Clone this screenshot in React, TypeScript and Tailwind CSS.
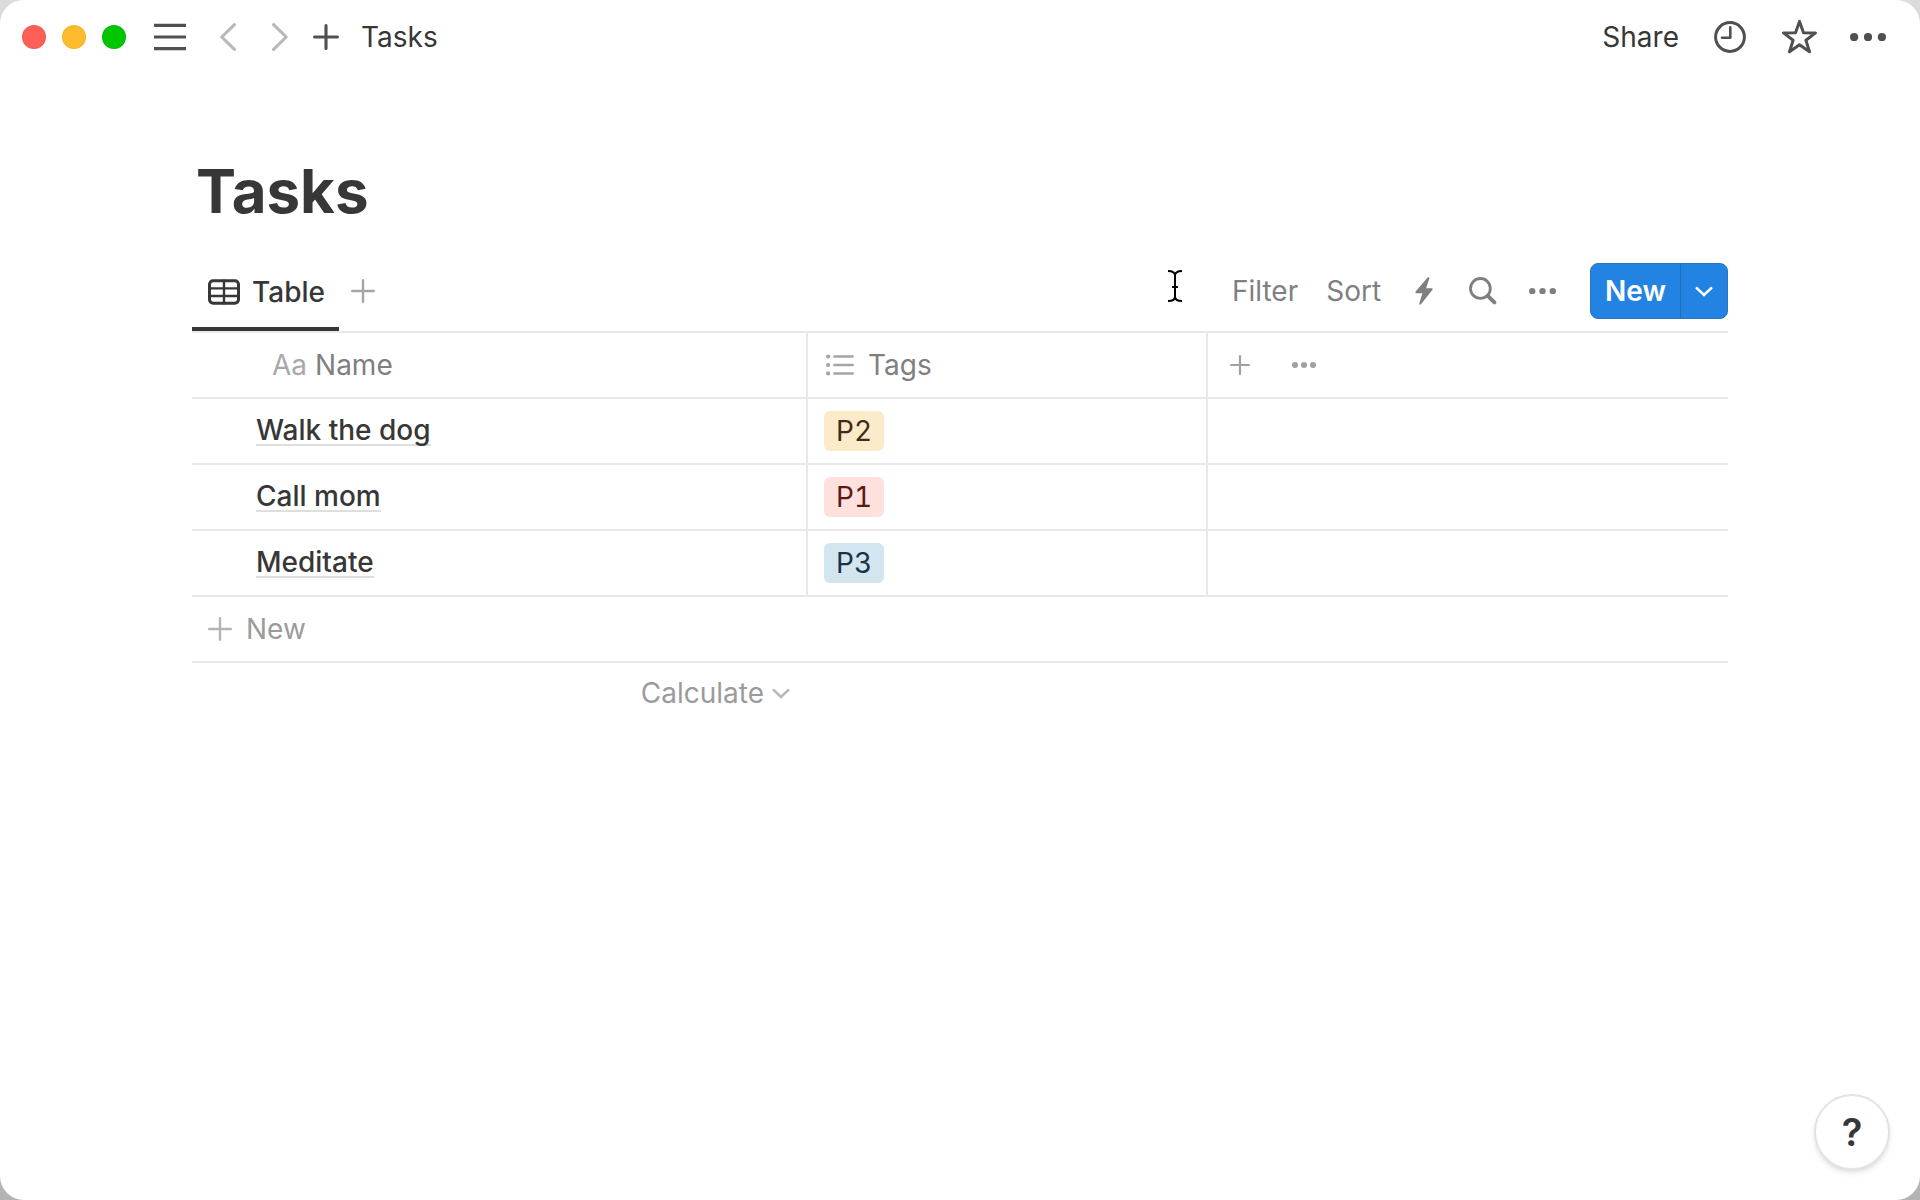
import type { ReactNode, SVGProps } from 'react';

type Tag = 'P1' | 'P2' | 'P3';

const TASKS: { name: string; tag: Tag }[] = [
  { name: 'Walk the dog', tag: 'P2' },
  { name: 'Call mom', tag: 'P1' },
  { name: 'Meditate', tag: 'P3' },
];

const TAG_STYLES: Record<Tag, string> = {
  P1: 'bg-[#fee1dd] text-[#5d1715]',
  P2: 'bg-[#fbebc8] text-[#402c1b]',
  P3: 'bg-[#d3e5ef] text-[#183347]',
};

function Stroke({ children, ...props }: SVGProps<SVGSVGElement>) {
  return (
    <svg fill="none" stroke="currentColor" strokeLinecap="round" strokeLinejoin="round" aria-hidden="true" {...props}>
      {children}
    </svg>
  );
}

function MenuIcon() {
  return (
    <svg width="32" height="28" viewBox="0 0 32 28" fill="currentColor" aria-hidden="true">
      <path d="M0 .8h32V4H0zM0 12.400h32v3.200H0zM0 24h32v3.200H0z" />
    </svg>
  );
}

function PlusIcon({ size, weight = 2 }: { size: number; weight?: number }) {
  return (
    <Stroke width={size} height={size} viewBox={`0 0 ${size} ${size}`} strokeWidth={weight}>
      <path d={`M${size / 2} ${weight / 2}V${size - weight / 2}M${weight / 2} ${size / 2}H${size - weight / 2}`} />
    </Stroke>
  );
}

function DotsIcon({ width, radius }: { width: number; radius: number }) {
  return (
    <svg width={width} height={radius * 2} viewBox={`0 0 ${width} ${radius * 2}`} fill="currentColor" aria-hidden="true">
      <circle cx={radius} cy={radius} r={radius} />
      <circle cx={width / 2} cy={radius} r={radius} />
      <circle cx={width - radius} cy={radius} r={radius} />
    </svg>
  );
}

function ChevronDown() {
  return (
    <Stroke width="18" height="12" viewBox="0 0 18 12" strokeWidth="2.6" strokeLinecap="butt" strokeLinejoin="miter">
      <path d="M1 2.400l8 7.600 8-7.600" />
    </Stroke>
  );
}

function TableIcon() {
  return (
    <Stroke width="32" height="26" viewBox="0 0 32 26" strokeWidth="3">
      <rect x="1.5" y="1.8" width="29" height="22.4" rx="3.6" />
      <path d="M1.5 9.4h29M1.5 17h29M16 1.800v22.400" strokeWidth="2.4" />
    </Stroke>
  );
}

function ListIcon() {
  return (
    <Stroke width="28" height="22" viewBox="0 0 28 22" strokeWidth="2.5">
      <path d="M8.300 2.600h18.400M8.300 11h18.400M8.300 19.400h18.400" />
      <path d="M2.100 2.600h.01M2.100 11h.01M2.100 19.400h.01" strokeWidth="4.2" />
    </Stroke>
  );
}

function IconButton({ label, className = '', children }: { label: string; className?: string; children: ReactNode }) {
  return (
    <button type="button" aria-label={label} className={`flex shrink-0 items-center justify-center ${className}`}>
      {children}
    </button>
  );
}

function TitleBar() {
  return (
    <header className="flex h-[74px] items-center justify-between pr-[34px] pl-[22px] text-[#505050]">
      <div className="flex items-center">
        <div className="flex gap-4">
          <span className="size-6 rounded-full bg-[#fe5f57] ring-1 ring-black/5 ring-inset" />
          <span className="size-6 rounded-full bg-[#febb2e] ring-1 ring-black/5 ring-inset" />
          <span className="size-6 rounded-full bg-[#00c600] ring-1 ring-black/5 ring-inset" />
        </div>
        <IconButton label="Open sidebar" className="ml-7">
          <MenuIcon />
        </IconButton>
        <IconButton label="Back" className="ml-[34px] text-[#b8b8b8]">
          <Stroke width="16" height="28" viewBox="0 0 16 28" strokeWidth="3.1">
            <path d="M14.400 1.600L1.800 14l12.600 12.400" />
          </Stroke>
        </IconButton>
        <IconButton label="Forward" className="ml-9 text-[#b8b8b8]">
          <Stroke width="16" height="28" viewBox="0 0 16 28" strokeWidth="3.1">
            <path d="M1.600 1.600L14.200 14 1.600 26.400" />
          </Stroke>
        </IconButton>
        <IconButton label="New page" className="ml-[25px]">
          <PlusIcon size={26} weight={3.1} />
        </IconButton>
        <a href="#tasks" className="ml-[22px] text-[#373737]">
          Tasks
        </a>
      </div>
      <div className="flex items-center">
        <button type="button" className="text-[#373737]">
          Share
        </button>
        <IconButton label="Updates" className="ml-[35px]">
          <Stroke width="32" height="32" viewBox="0 0 32 32" strokeWidth="3">
            <circle cx="16" cy="16" r="14.400" />
            <path d="M16.300 6.400v10.400H8" strokeWidth="2.6" />
          </Stroke>
        </IconButton>
        <IconButton label="Favorite" className="ml-9">
          <Stroke width="36" height="36" viewBox="0 0 36 36" strokeWidth="3">
            <path d="M17.500 2.400l4 11.300 12 .2-9.600 7.300 3.600 11.600-10-7-10 7 3.600-11.600-9.600-7.300 12-.2z" />
          </Stroke>
        </IconButton>
        <IconButton label="More options" className="ml-8">
          <DotsIcon width={36} radius={4.1} />
        </IconButton>
      </div>
    </header>
  );
}

function ViewBar() {
  return (
    <div className="mt-6 flex h-20 items-stretch justify-between border-b-2 border-[#e9e9e9]">
      <div className="flex">
        <button
          type="button"
          className="flex items-center gap-3 border-y-4 border-t-transparent border-b-[#373737] pr-3.5 pl-4 font-medium text-[#373737]"
        >
          <TableIcon />
          Table
        </button>
        <IconButton label="Add view" className="px-3 pb-0.5 text-[#a5a5a5]">
          <PlusIcon size={24} weight={2.4} />
        </IconButton>
      </div>
      <div className="relative flex items-center pb-0.5 text-[#7f7f7f]">
        {/* text cursor hovering beside the filters */}
        <svg
          className="absolute top-[17px] -left-16"
          width="14"
          height="32"
          viewBox="0 0 14 32"
          fill="none"
          stroke="#000"
          strokeWidth="2"
          aria-hidden="true"
        >
          <path d="M0 1c4 0 7 1.200 7 4.500v21c0 3.300-3 4.500-7 4.500M14 1c-4 0-7 1.200-7 4.500M14 31c-4 0-7-1.200-7-4.500M4 17h6" />
        </svg>
        <button type="button">Filter</button>
        <button type="button" className="ml-7">
          Sort
        </button>
        <IconButton label="Automations" className="ml-[34px]">
          <svg width="18" height="28" viewBox="0 0 18 28" fill="currentColor" aria-hidden="true">
            <path d="M12.600.6L.7 14.500c-.8 1-.3 1.700.7 1.700h6L4.300 26.400c-.3 1.200.8 1.900 1.700.9L17.300 13c.8-1 .3-1.700-.7-1.700h-5.500L14.300 1.600C14.700.4 13.500-.4 12.600.6z" />
          </svg>
        </IconButton>
        <IconButton label="Search" className="ml-9">
          <Stroke width="28" height="28" viewBox="0 0 28 28" strokeWidth="2.8">
            <circle cx="11.400" cy="11.400" r="9.900" />
            <path d="M18.800 18.800l6.600 6.600" strokeWidth="3.8" />
          </Stroke>
        </IconButton>
        <IconButton label="View options" className="ml-8">
          <DotsIcon width={27} radius={3.2} />
        </IconButton>
        <div className="ml-[34px] flex h-14 overflow-hidden rounded-lg border border-[#2b76bd] bg-[#2383e2] text-white">
          <button type="button" className="border-r border-[#1f6fbf] px-3.5 font-semibold">
            New
          </button>
          <IconButton label="New from template" className="w-[46px]">
            <ChevronDown />
          </IconButton>
        </div>
      </div>
    </div>
  );
}

function TaskTable() {
  return (
    <table className="w-full table-fixed border-separate border-spacing-0 text-left">
      <thead className="text-[#7f7f7f]">
        <tr className="h-[66px]">
          <th className="w-[616px] border-r-2 border-b-2 border-[#e9e9e9] p-0 font-normal">
            <div className="flex items-center gap-2 pl-20">
              <span className="text-[#a8a8a8]">Aa</span>
              Name
            </div>
          </th>
          <th className="w-[400px] border-r-2 border-b-2 border-[#e9e9e9] p-0 font-normal">
            <div className="flex items-center gap-3.5 pl-[18px]">
              <span className="text-[#a5a5a5]">
                <ListIcon />
              </span>
              Tags
            </div>
          </th>
          <th className="border-b-2 border-[#e9e9e9] p-0 font-normal text-[#a0a0a0]">
            <div className="flex items-center gap-[42px] pl-[22px]">
              <IconButton label="Add property">
                <PlusIcon size={20} weight={2.2} />
              </IconButton>
              <IconButton label="Property options">
                <DotsIcon width={24} radius={3} />
              </IconButton>
            </div>
          </th>
        </tr>
      </thead>
      <tbody>
        {TASKS.map((task) => (
          <tr key={task.name} className="h-[66px]">
            <td className="border-r-2 border-b-2 border-[#e9e9e9] p-0">
              <div className="flex pl-16">
                <a href="#task" className="border-b-2 border-[#dededd] leading-[28px] font-medium text-[#373737]">
                  {task.name}
                </a>
              </div>
            </td>
            <td className="border-r-2 border-b-2 border-[#e9e9e9] p-0">
              <div className="flex pl-4">
                <span className={`h-10 min-w-[59px] rounded-md px-3 leading-10 tabular-nums ${TAG_STYLES[task.tag]}`}>
                  {task.tag}
                </span>
              </div>
            </td>
            <td className="border-b-2 border-[#e9e9e9] p-0" />
          </tr>
        ))}
      </tbody>
    </table>
  );
}

export default function App() {
  return (
    <div className="min-h-screen bg-gradient-to-b from-[#dcdcdc] to-[#b4b4b4] font-['Inter',sans-serif] text-[28px] leading-[34px]">
      <div className="relative min-h-screen rounded-3xl bg-white">
        <TitleBar />
        <main className="px-48 pt-20">
          <h1 id="tasks" className="pl-1 text-[60px] leading-[75px] font-bold text-[#373737]">
            Tasks
          </h1>
          <ViewBar />
          <TaskTable />
          <button
            type="button"
            className="flex h-[66px] w-full items-center gap-3.5 border-b-2 border-[#e9e9e9] px-4 text-[#9b9b9b]"
          >
            <span className="text-[#b4b4b4]">
              <PlusIcon size={24} weight={2.4} />
            </span>
            New
          </button>
          <div className="flex h-[60px] w-[616px] items-center justify-end pr-[18px]">
            <button type="button" className="flex items-center gap-2 text-[#9b9b9b]">
              Calculate
              <span className="text-[#b8b8b8]">
                <ChevronDown />
              </span>
            </button>
          </div>
        </main>
        <button
          type="button"
          aria-label="Help"
          className="absolute right-[30px] bottom-[30px] size-[76px] rounded-full border-2 border-[#e3e3e3] bg-white text-[38px] font-semibold text-[#373737] shadow-md"
        >
          ?
        </button>
      </div>
    </div>
  );
}
